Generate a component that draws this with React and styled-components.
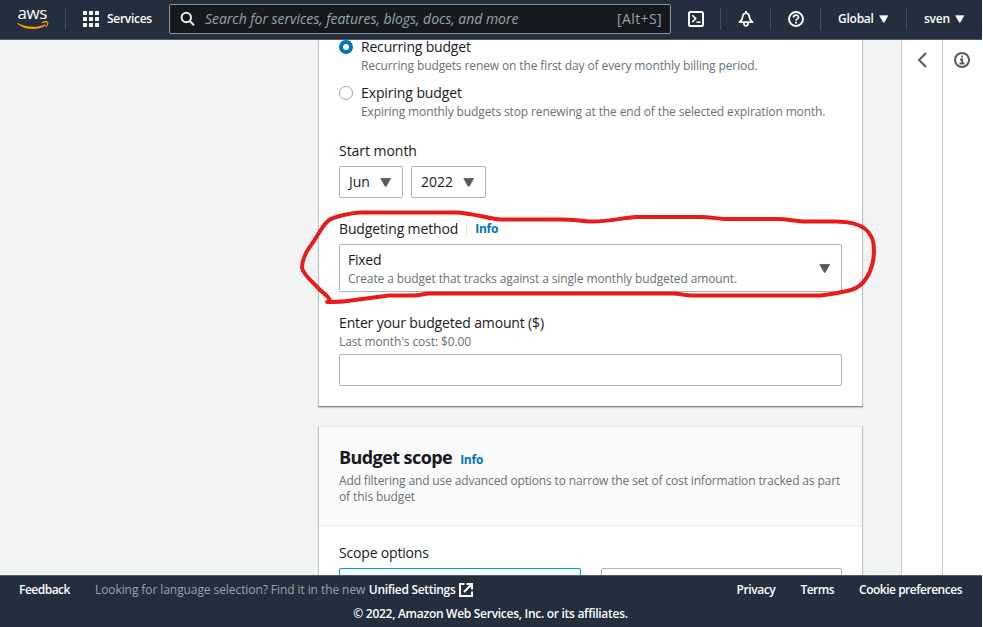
import React from "react";
import styled, { createGlobalStyle } from "styled-components";

const GlobalStyle = createGlobalStyle`
  * { box-sizing: border-box; }
  body { margin: 0; overflow: hidden; background: #fff; font-family: "Open Sans", "Noto Sans", sans-serif; color: #16191f; }
`;

const Page = styled.div`
  width: 982px;
  height: 627px;
  display: flex;
  flex-direction: column;
  position: relative;
`;

const Text = styled.span`
  font-size: ${(p) => p.$size || 14}px;
  line-height: ${(p) => p.$lh || 20}px;
  font-weight: ${(p) => p.$weight || 400};
  letter-spacing: ${(p) => p.$ls || 0}px;
  color: ${(p) => p.$color || "#16191f"};
  white-space: nowrap;
`;

/* ---------- top navigation ---------- */
const TopBar = styled.header`
  height: 40px;
  flex: none;
  display: flex;
  align-items: center;
  background: #232f3e;
  border-bottom: 1px solid #545b64;
  padding: 0 0 1px 17px;
`;
const Logo = styled.div`
  width: 32px;
  height: 30px;
  display: flex;
  flex-direction: column;
  margin-top: 2px;
`;
const LogoWord = styled.span`
  font: 500 17px/17px "Open Sans", "Noto Sans", sans-serif;
  letter-spacing: -0.4px;
  color: #fff;
  height: 17px;
  padding-left: 0.5px;
  margin-top: -1px;
`;
const Divider = styled.i`
  width: 1px;
  height: 22px;
  flex: none;
  background: #414d5c;
  margin-left: ${(p) => p.$left || 0}px;
`;
const Services = styled.div`
  display: flex;
  align-items: center;
  gap: 8px;
  margin: 0 0 0 17px;
  width: 86px;
`;
const Search = styled.div`
  width: 502px;
  height: 30px;
  display: flex;
  align-items: center;
  background: #161a20;
  border: 1px solid #879596;
  border-radius: 2px;
  padding: 0 8px 0 10px;
`;
const Placeholder = styled(Text)`
  font-style: italic;
  flex: 1;
  margin-left: 9px;
`;
const IconSlot = styled.div`
  width: 49px;
  display: flex;
  justify-content: center;
`;
const Menu = styled.div`
  display: flex;
  align-items: center;
  gap: 5px;
  width: ${(p) => p.$w}px;
  padding-left: ${(p) => p.$left}px;
`;

/* ---------- main area ---------- */
const Main = styled.main`
  height: 535px;
  flex: none;
  display: flex;
  background: #f2f3f3;
  padding-left: 318px;
  overflow: hidden;
`;
const Form = styled.div`
  width: 545px;
  flex: none;
`;
const Card = styled.section`
  background: #fff;
  border: 1px solid #bec4c5;
  border-top: ${(p) => (p.$first ? "0" : "1px solid #e3e6e6")};
  border-bottom: 1px solid #7c8889;
  height: ${(p) => p.$h}px;
  margin-bottom: 19px;
  padding: 0 20px;
  display: flex;
  flex-direction: column;
  box-shadow: 0 1px 1px rgba(0, 28, 36, 0.18);
`;
const RadioRow = styled.div`
  display: flex;
  gap: 8px;
  height: 46px;
  margin-top: ${(p) => p.$shift || 0}px;
`;
const Radio = styled.i`
  width: 14px;
  height: 14px;
  flex: none;
  border-radius: 50%;
  background: #fff;
  border: ${(p) => (p.$on ? "4px solid #0073bb" : "1px solid #9ba7a8")};
  margin-top: 3px;
`;
const Stack = styled.div`
  display: flex;
  flex-direction: column;
  gap: ${(p) => p.$gap || 0}px;
`;
const StartLabel = styled(Text)`
  margin-top: 12px;
`;
const Selects = styled.div`
  display: flex;
  gap: 8px;
  margin-top: 5px;
`;
const Select = styled.div`
  width: ${(p) => p.$w}px;
  height: 32px;
  display: flex;
  align-items: center;
  justify-content: space-between;
  border: 1px solid #aab7b8;
  border-radius: 2px;
  padding: 0 10px 0 9px;
`;
const LabelRow = styled.div`
  display: flex;
  align-items: center;
  height: 20px;
  margin-top: 21px;
`;
const LabelRule = styled.i`
  width: 1px;
  height: 18px;
  background: #e3e6e6;
  margin: 0 8px;
`;
const MethodSelect = styled.div`
  height: 48px;
  margin-top: 5px;
  border: 1px solid #aab7b8;
  border-radius: 2px;
  display: flex;
  justify-content: space-between;
  align-items: center;
  padding: 0 10px 0 8px;
`;
const AmountBlock = styled(Stack)`
  margin-top: 21px;
`;
const Field = styled.div`
  height: 32px;
  margin-top: 3px;
  border: 1px solid #aab7b8;
  border-radius: 2px;
`;
const CardHeader = styled.div`
  height: 99px;
  flex: none;
  margin: 0 -20px;
  padding: 18px 20px 0;
  background: #fafafa;
  border-bottom: 1px solid #eaeded;
`;
const TitleRow = styled.div`
  display: flex;
  align-items: baseline;
  gap: 8px;
  height: 28px;
`;
const ScopeLabel = styled(Text)`
  margin-top: 17px;
`;
const Tiles = styled.div`
  display: grid;
  grid-template-columns: 242px 241px;
  gap: 20px;
  margin-top: 5px;
`;
const Tile = styled.div`
  height: 70px;
  border: 1px solid ${(p) => (p.$on ? "#00a1c9" : "#aab7b8")};
  background: ${(p) => (p.$on ? "#f1faff" : "#fff")};
  border-radius: 2px;
`;
const SideTools = styled.aside`
  margin-left: auto;
  width: 81px;
  display: grid;
  grid-template-columns: 41px 40px;
  background: #fff;
`;
const Tool = styled.div`
  border-left: 1px solid #c4c9ca;
  display: flex;
  padding: 12px 0 0 ${(p) => p.$left}px;
  height: 535px;
`;

/* ---------- footer ---------- */
const Footer = styled.footer`
  height: 52px;
  flex: none;
  background: #232f3e;
  border-top: 1px solid #545b64;
  padding: 4px 20px 0 19px;
`;
const FooterRow = styled.div`
  display: flex;
  align-items: center;
  height: 20px;
`;
const FooterLinks = styled.div`
  display: flex;
  gap: 25px;
  margin-left: auto;
`;
const Hint = styled(Text)`
  margin: 0 3.5px 0 25px;
`;
const ExternalIcon = styled.svg`
  margin-left: 3px;
`;
const Copyright = styled.div`
  display: flex;
  justify-content: center;
  margin-top: 4px;
`;

const Scribble = styled.svg`
  position: absolute;
  left: 295px;
  top: 205px;
  pointer-events: none;
`;

const Caret = ({ color = "#545b64", w = 12, h = 9 }) => (
  <svg width={w} height={h} viewBox="0 0 12 9">
    <path d="M.8 .5h9.800L6.200 8.300H5.200z" fill={color} stroke={color} strokeWidth=".8" strokeLinejoin="round" />
  </svg>
);

const Nav = (p) => <Text $size={12} $weight={600} $color="#fff" {...p} />;
const Note = (p) => <Text $size={12} $lh={16} $color="#687078" {...p} />;
const Info = () => <Text $size={12} $weight={700} $color="#0073bb" $ls={-0.25}>Info</Text>;

export default function App() {
  return (
    <Page>
      <GlobalStyle />
      <TopBar>
        <Logo>
          <LogoWord>aws</LogoWord>
          <svg width="32" height="10" viewBox="0 0 32 10" fill="none">
            <path d="M.3 1.800C8.500 6.500 19.500 7.300 28 3.300L28.600 4.500C20 9.700 7.500 9.200 .1 2.500z" fill="#ff9900" />
            <path d="M25 1.700C27.500 .7 30.300 .7 30.700 1.300C31 2.200 30 4.800 28.700 6.200" stroke="#ff9900" strokeWidth="1.100" />
          </svg>
        </Logo>
        <Divider $left={16} />
        <Services>
          <svg width="16" height="16" viewBox="0 0 16 16" fill="#fff">
            {[0, 6, 12].map((y) => [0, 6, 12].map((x) => <rect key={x + "-" + y} x={x} y={y} width="4" height="4" rx=".5" />))}
          </svg>
          <Nav $ls={-0.28}>Services</Nav>
        </Services>
        <Search>
          <svg width="16" height="16" viewBox="0 0 16 16" fill="none" stroke="#e8ecec" strokeWidth="2">
            <circle cx="6.300" cy="6.500" r="4.700" />
            <path d="M9.700 10L14 14.300" />
          </svg>
          <Placeholder $color="#95a5a6" $ls={-0.035}>Search for services, features, blogs, docs, and more</Placeholder>
          <Text $color="#95a5a6" $ls={0.39}>[Alt+S]</Text>
        </Search>
        <IconSlot>
          <svg width="16" height="16" viewBox="0 0 16 16" fill="none" stroke="#fff" strokeWidth="2">
            <rect x="1" y="1" width="14" height="14" rx="1.500" />
            <path d="M4.300 4.300L7.700 7.600L4.300 11" strokeWidth="1.600" />
            <path d="M8.500 11.200h4" strokeWidth="1.600" />
          </svg>
        </IconSlot>
        <Divider />
        <IconSlot>
          <svg width="16" height="16" viewBox="0 0 16 16" fill="none" stroke="#fff" strokeWidth="1.800">
            <path d="M8 1.800C5.700 2.300 4.700 4 4.600 6.300C4.500 8.500 3 9.700 1.500 11.200H14.500C13 9.700 11.500 8.500 11.400 6.300C11.300 4 10.300 2.300 8 1.800z" strokeLinejoin="round" />
            <path d="M8 0v2M5.800 12C6 15.800 10 15.800 10.200 12" />
          </svg>
        </IconSlot>
        <Divider />
        <IconSlot>
          <svg width="16" height="16" viewBox="0 0 16 16" fill="none" stroke="#fff" strokeWidth="1.900">
            <circle cx="8" cy="8" r="7" />
            <path d="M5.500 6.500C5.500 3.500 10.500 3.400 10.500 6.200C10.500 8 8 7.700 8 9.700" strokeWidth="1.700" />
            <path d="M8 10.800v1.800" />
          </svg>
        </IconSlot>
        <Divider />
        <Menu $w={85} $left={17}>
          <Nav $ls={-0.25}>Global</Nav>
          <Caret color="#fff" w={10} h={8} />
        </Menu>
        <Divider />
        <Menu $w={74} $left={17}>
          <Nav $ls={-0.25}>sven</Nav>
          <Caret color="#fff" w={10} h={8} />
        </Menu>
      </TopBar>

      <Main>
        <Form>
          <Card $first $h={367}>
            <RadioRow $shift={-3}>
              <Radio $on />
              <Stack $gap={1}>
                <Text $ls={-0.19}>Recurring budget</Text>
                <Note $ls={-0.112}>Recurring budgets renew on the first day of every monthly billing period.</Note>
              </Stack>
            </RadioRow>
            <RadioRow>
              <Radio />
              <Stack $gap={1}>
                <Text $ls={-0.1}>Expiring budget</Text>
                <Note $ls={-0.125}>Expiring monthly budgets stop renewing at the end of the selected expiration month.</Note>
              </Stack>
            </RadioRow>
            <StartLabel $ls={-0.04}>Start month</StartLabel>
            <Selects>
              <Select $w={64}><Text>Jun</Text><Caret /></Select>
              <Select $w={75}><Text>2022</Text><Caret /></Select>
            </Selects>
            <LabelRow>
              <Text $ls={-0.14}>Budgeting method</Text>
              <LabelRule />
              <Info />
            </LabelRow>
            <MethodSelect>
              <Stack $gap={1}>
                <Text $ls={-0.25}>Fixed</Text>
                <Note $ls={-0.115}>Create a budget that tracks against a single monthly budgeted amount.</Note>
              </Stack>
              <Caret />
            </MethodSelect>
            <AmountBlock $gap={1}>
              <Text $ls={-0.15}>Enter your budgeted amount ($)</Text>
              <Note $ls={-0.11}>Last month's cost: $0.00</Note>
              <Field />
            </AmountBlock>
          </Card>
          <Card $h={250}>
            <CardHeader>
              <TitleRow>
                <Text $size={18} $lh={24} $weight={700} $ls={-0.57}>Budget scope</Text>
                <Info />
              </TitleRow>
              <Stack>
                <Note $ls={-0.142}>Add filtering and use advanced options to narrow the set of cost information tracked as part</Note>
                <Note $ls={-0.1}>of this budget</Note>
              </Stack>
            </CardHeader>
            <ScopeLabel $ls={-0.18}>Scope options</ScopeLabel>
            <Tiles>
              <Tile $on />
              <Tile />
            </Tiles>
          </Card>
        </Form>
        <SideTools>
          <Tool $left={12}>
            <svg width="16" height="16" viewBox="0 0 16 16" fill="none" stroke="#545b64" strokeWidth="2">
              <path d="M12 1L5 8l7 7" />
            </svg>
          </Tool>
          <Tool $left={11}>
            <svg width="16" height="16" viewBox="0 0 16 16" fill="none" stroke="#545b64" strokeWidth="2">
              <circle cx="8" cy="8" r="7" />
              <path d="M8 3.500v2M6 7.500h2.200v4M5.500 11.500h5" strokeWidth="1.800" />
            </svg>
          </Tool>
        </SideTools>
      </Main>

      <Footer>
        <FooterRow>
          <Nav $ls={-0.5}>Feedback</Nav>
          <Hint $size={12} $color="#95a5a6" $ls={-0.08}>Looking for language selection? Find it in the new</Hint>
          <Nav $ls={-0.3}>Unified Settings</Nav>
          <ExternalIcon width="14" height="14" viewBox="0 0 14 14" fill="none" stroke="#fff" strokeWidth="2">
            <path d="M5.500 1H1v12h12V8.500M7.500 1H13v5.500M12.700 1.300L5 9" />
          </ExternalIcon>
          <FooterLinks>
            <Nav $ls={-0.4}>Privacy</Nav>
            <Nav $ls={-0.5}>Terms</Nav>
            <Nav $ls={-0.49}>Cookie preferences</Nav>
          </FooterLinks>
        </FooterRow>
        <Copyright>
          <Nav $ls={-0.285}>© 2022, Amazon Web Services, Inc. or its affiliates.</Nav>
        </Copyright>
      </Footer>

      <Scribble width="590" height="105" viewBox="295 205 590 105" fill="none" stroke="#e81c1c" strokeWidth="4" strokeLinecap="round" strokeLinejoin="round">
        <path d="M327 302C332 302 341 302 351 300.500L389 295.500H414C421 295 424 293.500 430 293.500H672C681 293.500 684 295.500 692 295.500H821C832 294 841 292.500 851 290C863 287 874 272 874 250C874 232 864 221.500 836 221.500H803C793 221 788 219 776 219H724C716 218.500 710 217 700 217H636C622 218 606 222 592 221.500C580 221 570 219 558 219.500H500C487 218.500 473 213 455 212.500H360C350 213 334 217 329 220C323 224 318 236 309 248C303 257 302 262 302 268C303 275 317 286 319 289C324 294 329 296 330 301" />
      </Scribble>
    </Page>
  );
}
